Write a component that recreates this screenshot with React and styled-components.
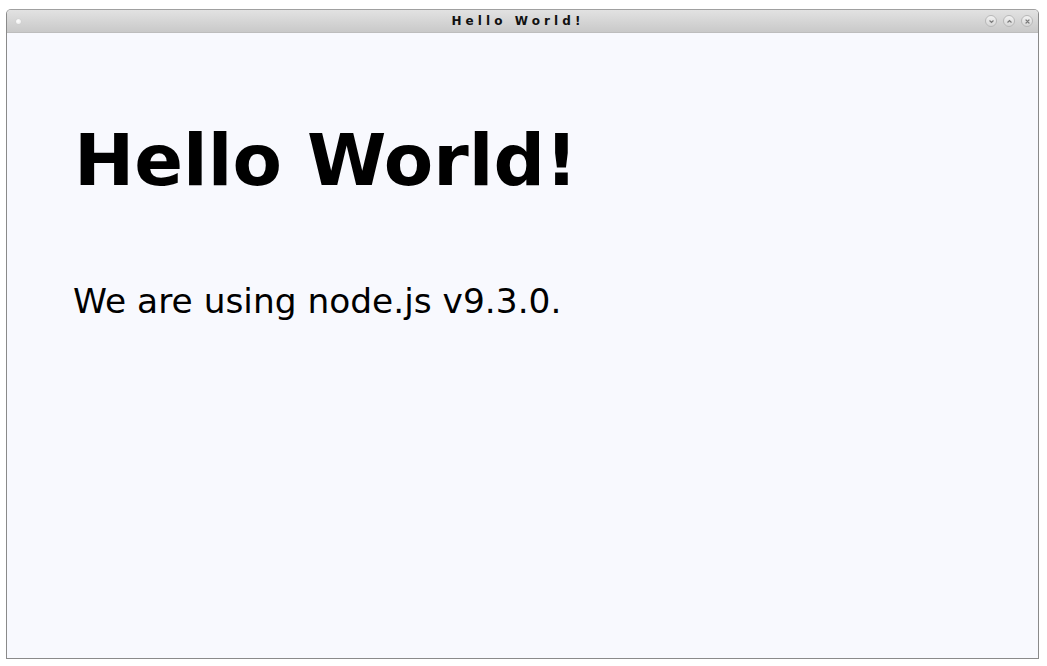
import React from "react";
import styled, { createGlobalStyle } from "styled-components";

const Global = createGlobalStyle`
  html, body { margin: 0; padding: 0; background: #ffffff; }
  body { font-family: "DejaVu Sans", "Noto Sans", sans-serif; }
`;

const Screen = styled.div`
  width: 1047px;
  height: 666px;
  box-sizing: border-box;
  padding: 9px 8px 7px 6px;
  background: #ffffff;
`;

const Window = styled.div`
  height: 100%;
  display: flex;
  flex-direction: column;
  box-sizing: border-box;
  border: 1px solid #8a8a8a;
  border-top-color: #a0a0a0;
  border-radius: 5px 5px 0 0;
  overflow: hidden;
  background: #f8f9fe;
`;

const TitleBar = styled.div`
  height: 22px;
  flex: none;
  display: flex;
  align-items: center;
  padding: 0 5px 0 9px;
  background: linear-gradient(#e2e2e2, #c9c9c9);
  border-bottom: 1px solid #bdbdbd;
`;

const MenuDot = styled.span`
  width: 5px;
  height: 5px;
  border-radius: 50%;
  background: radial-gradient(circle at 40% 40%, #ffffff, #e6e6e6);
  box-shadow: 0 0 1px #b8b8b8;
`;

const Title = styled.div`
  flex: 1;
  text-align: center;
  font-family: "DejaVu Sans", sans-serif;
  font-weight: bold;
  font-size: 12px;
  letter-spacing: 4.1px;
  color: #111;
  padding-left: 30px;
`;

const Buttons = styled.div`
  display: flex;
  gap: 6px;
  align-items: center;
`;

const CircleBtn = styled.span`
  width: 12px;
  height: 12px;
  border-radius: 50%;
  box-sizing: border-box;
  border: 1px solid #b8b8b8;
  background: linear-gradient(#f2f2f2, #d6d6d6);
  display: flex;
  align-items: center;
  justify-content: center;
`;

const Content = styled.main`
  flex: 1;
  padding: 84px 0 0 67px;
  color: #000;
`;

const Heading = styled.h1`
  margin: 0;
  font-family: "DejaVu Sans", sans-serif;
  font-weight: bold;
  font-size: 72px;
  line-height: 87px;
`;

const Paragraph = styled.p`
  margin: 0 0 0 -1px;
  padding-top: 77px;
  font-family: "DejaVu Sans", sans-serif;
  font-size: 34.4px;
  line-height: 41px;
`;

const Glyph = ({ type }) => (
  <svg width="7" height="7" viewBox="0 0 7 7" fill="none" stroke="#7a7a7a" strokeWidth="1.2" strokeLinecap="round">
    {type === "down" && <path d="M1.8 2.8 L3.5 4.4 L5.2 2.8" />}
    {type === "up" && <path d="M1.8 4.2 L3.5 2.6 L5.2 4.2" />}
    {type === "close" && <path d="M2 2 L5 5 M5 2 L2 5" />}
  </svg>
);

export default function App() {
  return (
    <>
      <Global />
      <Screen>
        <Window>
          <TitleBar>
            <MenuDot />
            <Title>Hello World!</Title>
            <Buttons>
              <CircleBtn><Glyph type="down" /></CircleBtn>
              <CircleBtn><Glyph type="up" /></CircleBtn>
              <CircleBtn><Glyph type="close" /></CircleBtn>
            </Buttons>
          </TitleBar>
          <Content>
            <Heading>Hello World!</Heading>
            <Paragraph>We are using node.js v9.3.0.</Paragraph>
          </Content>
        </Window>
      </Screen>
    </>
  );
}
